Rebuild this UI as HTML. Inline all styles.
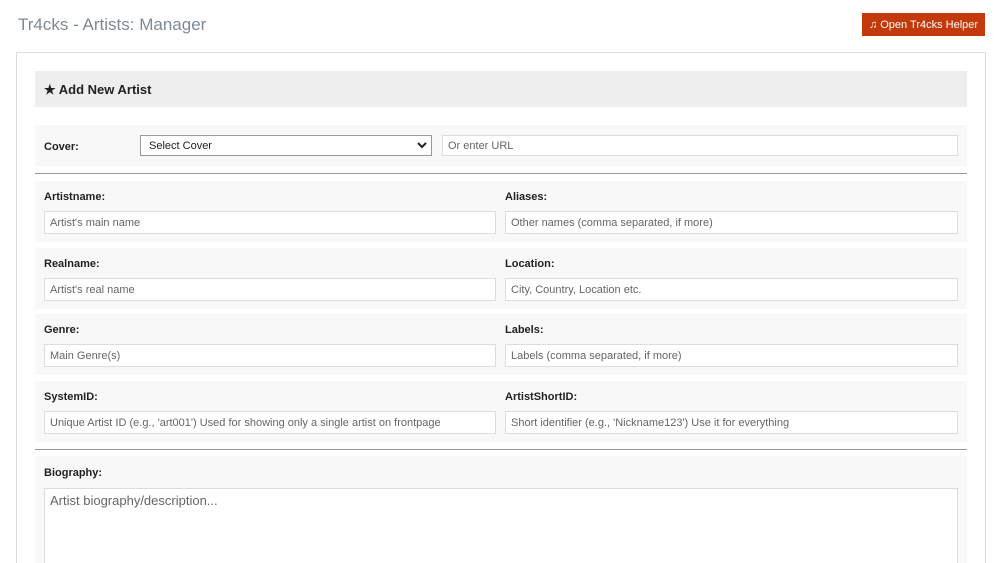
<!DOCTYPE html>
<html><head><style>
html,body{margin:0;width:1000px;height:563px;overflow:hidden;background:#fff;font-family:"Liberation Sans",Arial,sans-serif;position:relative}
.a{position:absolute;box-sizing:border-box}
.t{left:18px;top:15px;font-size:17px;color:#7d8a96}
.btn{left:862px;top:13px;width:123px;height:23px;background:#c4390b;color:#fff;font-size:11px;line-height:25px;text-align:center}
.card{left:16px;top:52px;width:970px;height:511px;border:1px solid #ddd;border-bottom:none}
.hd{left:35px;top:71px;width:932px;height:36px;background:#eee;font-size:13px;font-weight:bold;color:#222;line-height:37px;padding-left:9px}
.row{left:35px;width:932px;background:#f8f8f8}
.lb{font-size:11px;font-weight:bold;color:#222}
.in{border:1px solid #ddd;background:#fff;font-size:11px;color:#666;padding-left:5px;height:23px;line-height:23px}
.hr{left:35px;width:932px;height:1px;background:#999}
</style></head><body>
<div class="a t">Tr4cks - Artists: Manager</div>
<div class="a btn">♫ Open Tr4cks Helper</div>
<div class="a card"></div>
<div class="a hd">★ Add New Artist</div>
<div class="a row" style="top:125px;height:41px"></div>
<div class="a lb" style="left:44px;top:141px">Cover:</div>
<div class="a in" style="left:140px;top:135px;width:292px;height:21px;line-height:21px;border-color:#999;color:#222;padding-left:8px">Select Cover<svg style="position:absolute;right:4px;top:6px" width="10" height="7" viewBox="0 0 10 7"><path d="M1 1l4 4 4-4" stroke="#222" stroke-width="2" fill="none"/></svg></div>
<div class="a in" style="left:442px;top:135px;width:516px;height:21px;line-height:21px">Or enter URL</div>
<div class="a hr" style="top:173px"></div>

<div class="a row" style="top:181px;height:61px"></div>
<div class="a lb" style="left:44px;top:191px">Artistname:</div>
<div class="a lb" style="left:505px;top:191px">Aliases:</div>
<div class="a in" style="left:44px;top:211px;width:452px">Artist's main name</div>
<div class="a in" style="left:505px;top:211px;width:453px">Other names (comma separated, if more)</div>

<div class="a row" style="top:248px;height:61px"></div>
<div class="a lb" style="left:44px;top:258px">Realname:</div>
<div class="a lb" style="left:505px;top:258px">Location:</div>
<div class="a in" style="left:44px;top:278px;width:452px">Artist's real name</div>
<div class="a in" style="left:505px;top:278px;width:453px">City, Country, Location etc.</div>

<div class="a row" style="top:314px;height:61px"></div>
<div class="a lb" style="left:44px;top:324px">Genre:</div>
<div class="a lb" style="left:505px;top:324px">Labels:</div>
<div class="a in" style="left:44px;top:344px;width:452px">Main Genre(s)</div>
<div class="a in" style="left:505px;top:344px;width:453px">Labels (comma separated, if more)</div>

<div class="a row" style="top:381px;height:61px"></div>
<div class="a lb" style="left:44px;top:391px">SystemID:</div>
<div class="a lb" style="left:505px;top:391px">ArtistShortID:</div>
<div class="a in" style="left:44px;top:411px;width:452px">Unique Artist ID (e.g., 'art001') Used for showing only a single artist on frontpage</div>
<div class="a in" style="left:505px;top:411px;width:453px">Short identifier (e.g., 'Nickname123') Use it for everything</div>
<div class="a hr" style="top:449px"></div>

<div class="a row" style="top:456px;height:107px"></div>
<div class="a lb" style="left:44px;top:467px">Biography:</div>
<div class="a in" style="left:44px;top:488px;width:914px;height:75px;border-bottom:none;font-size:13px;line-height:24px">Artist biography/description...</div>
</body></html>
